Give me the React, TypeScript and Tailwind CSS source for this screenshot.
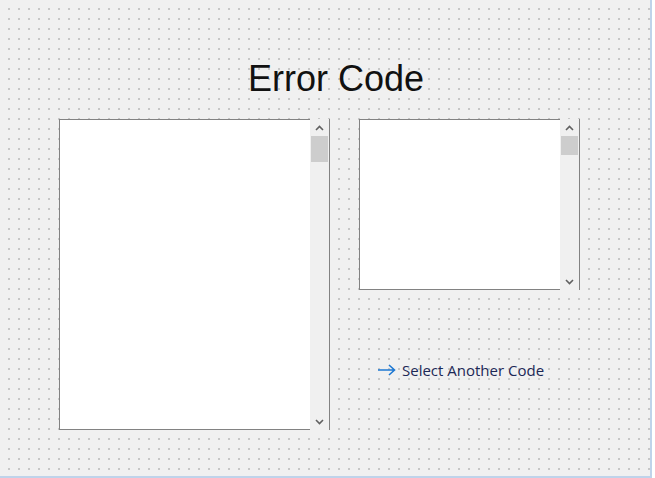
import React from 'react';

function Chevron({ dir }: { dir: 'up' | 'down' }) {
  return (
    <svg width="9" height="6" viewBox="0 0 9 6" className="block">
      <path
        d={dir === 'up' ? 'M1 5 L4.5 1.5 L8 5' : 'M1 1 L4.5 4.5 L8 1'}
        fill="none"
        stroke="#606060"
        strokeWidth="1.6"
      />
    </svg>
  );
}

function ListBox({ width, height, thumb }: { width: number; height: number; thumb: number }) {
  return (
    <div className="flex" style={{ width, height }}>
      <div className="flex-1 bg-white border-l border-t border-b border-[#828282]" />
      <div className="w-[19px] bg-[#f0f0f0] flex flex-col">
        <div className="h-[17px] flex items-center justify-center">
          <Chevron dir="up" />
        </div>
        <div className="mx-px bg-[#cdcdcd]" style={{ height: thumb }} />
        <div className="flex-1" />
        <div className="h-[17px] flex items-center justify-center">
          <Chevron dir="down" />
        </div>
      </div>
      <div className="w-px bg-[#828282]" />
    </div>
  );
}

export default function App() {
  return (
    <div className="w-[655px] h-[478px] bg-white">
      <div className="w-[652px] h-[478px] border-r-2 border-b-2 border-[#bfd3ea] bg-[#f0f0f0] bg-[radial-gradient(circle,#b0b0b0_0.6px,transparent_0.9px)] bg-size-[10px_10px] bg-position-[4px_4px]">
        {/* title */}
        <div className="pl-[248px] pt-[61px]">
          <h1 className="text-[36px] leading-none text-[#111] font-['Liberation_Sans',Arial,sans-serif]">
            Error Code
          </h1>
        </div>

        <div className="flex items-start gap-[29px] pl-[59px] mt-[22px]">
          <ListBox width={271} height={311} thumb={26} />

          <div className="flex flex-col">
            <ListBox width={221} height={171} thumb={19} />

            {/* link */}
            <div className="flex items-center gap-[6px] pl-[18px] mt-[70px] h-[20px]">
              <svg width="19" height="12" viewBox="0 0 19 12" className="block">
                <path d="M1 6 H17.5 M12 1 L17.5 6 L12 11" fill="none" stroke="#1e78d2" strokeWidth="1.6" />
              </svg>
              <span className="text-[15px] leading-[20px] text-[#1c2856] font-['Open_Sans','Noto_Sans',sans-serif]">
                Select Another Code
              </span>
            </div>
          </div>
        </div>
      </div>
    </div>
  );
}
